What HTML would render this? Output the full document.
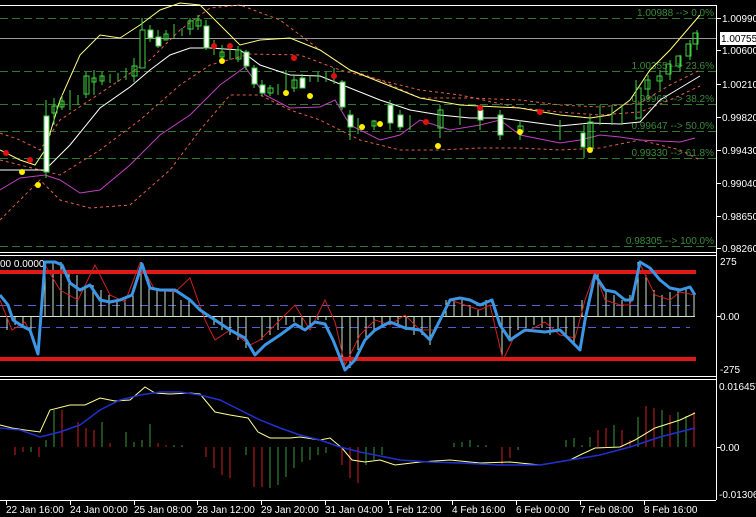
<!DOCTYPE html>
<html><head><meta charset="utf-8"><style>
html,body{margin:0;padding:0;background:#000;width:756px;height:517px;overflow:hidden}
svg{display:block}
text{font-family:"Liberation Sans",sans-serif;font-size:10px}
</style></head><body>
<svg width="756" height="517" viewBox="0 0 756 517" xmlns="http://www.w3.org/2000/svg">
<rect width="756" height="517" fill="#000"/>
<g stroke="#fff" fill="none" stroke-width="1">
<line x1="0" y1="5.5" x2="716" y2="5.5"/>
<line x1="716.5" y1="5" x2="716.5" y2="500"/>
<line x1="0" y1="252.5" x2="716" y2="252.5"/>
<line x1="0" y1="255.5" x2="716" y2="255.5"/>
<line x1="0" y1="376.5" x2="716" y2="376.5"/>
<line x1="0" y1="379.5" x2="716" y2="379.5"/>
<line x1="0" y1="500.5" x2="716" y2="500.5"/>
</g>
<g stroke="#2f7a2f" stroke-dasharray="8,4" stroke-width="1">
<line x1="0" y1="18.5" x2="716" y2="18.5"/>
<line x1="0" y1="71.5" x2="716" y2="71.5"/>
<line x1="0" y1="104.5" x2="716" y2="104.5"/>
<line x1="0" y1="131.5" x2="716" y2="131.5"/>
<line x1="0" y1="158.5" x2="716" y2="158.5"/>
<line x1="0" y1="246.5" x2="716" y2="246.5"/>
</g>
<line x1="0" y1="38.5" x2="716" y2="38.5" stroke="#999"/>
<g fill="#3a8a3a" text-anchor="end">
<text x="714" y="16">1.00988 --&gt; 0.0%</text>
<text x="714" y="69">1.00355 --&gt; 23.6%</text>
<text x="714" y="102">0.99963 --&gt; 38.2%</text>
<text x="714" y="129">0.99647 --&gt; 50.0%</text>
<text x="714" y="156">0.99330 --&gt; 61.8%</text>
<text x="714" y="244">0.98305 --&gt; 100.0%</text>
</g>
<g fill="none" stroke-width="1">
<polyline stroke="#e0604a" stroke-dasharray="3,3" points="0,133 20,140 40,150 60,120 90,100 120,80 150,60 180,30 210,8 240,5 280,20 320,50 350,70 380,80 420,98 470,98 520,100 560,105 600,107 640,103 670,85 700,70"/>
<polyline stroke="#e0604a" stroke-dasharray="3,3" points="0,220 20,200 40,180 60,200 90,208 130,205 170,170 200,130 230,95 260,95 290,110 320,120 360,140 400,150 440,150 480,148 520,148 560,150 600,148 640,140 680,150 700,160"/>
<polyline stroke="#e0604a" stroke-dasharray="3,3" points="0,160 20,165 40,170 60,175 100,150 140,120 180,85 210,65 250,54 300,55 340,70 380,80 420,90 460,95 520,108 560,112 600,115 640,112 670,100 700,86"/>
<polyline stroke="#ffff80" points="0,150 20,160 35,165 45,150 60,100 80,55 100,35 120,38 140,25 160,10 180,3 200,5 220,25 240,45 260,40 290,38 320,50 350,70 380,82 420,98 460,105 520,108 560,115 590,118 610,115 630,100 650,70 670,50 700,15"/>
<polyline stroke="#fff" points="0,170 20,170 45,170 70,145 100,108 130,87 150,70 170,55 190,48 210,48 240,50 260,65 290,75 320,76 350,88 380,100 410,110 440,115 470,118 500,118 530,122 560,126 590,123 620,124 640,122 660,100 680,88 700,76"/>
<polyline stroke="#c040c0" points="0,190 20,178 45,175 60,180 80,193 100,190 130,165 160,135 190,115 220,85 245,67 265,95 290,108 320,107 335,100 350,125 380,140 400,135 420,120 450,130 480,125 500,120 520,135 560,143 580,140 600,135 620,137 640,140 680,142 695,138"/>
</g>
<g stroke="#3fd23f" fill="#fff" stroke-width="1">
<path d="M46,100V178M54,98V125M62,95V110M70,90V110M78,95V105M86,72V98M94,70V95M102,72V85M110,74V83M118,73V82M126,68V80M134,58V82M142,18V68M150,25V42M158,30V48M166,30V40M174,24V38M182,28V36M190,18V35M198,15V30M206,20V50M214,40V55M222,45V58M230,47V60M238,46V62M246,50V70M254,65V88M262,80V96M270,85V96M278,84V95M286,70V95M294,76V92M302,74V85M310,75V82M318,72V82M326,72V82M334,68V84M342,80V110M350,110V140M358,118V134M374,120V130M390,100V130M400,110V130M410,115V130M440,105V138M460,108V125M480,108V130M500,110V140M520,120V140M560,120V140M584,125V158M590,115V150M600,105V125M612,105V125M622,105V125M636,80V120M648,75V100M660,70V90M670,60V80M680,55V72M690,40V60M697,30V50"/>
<rect x="44" y="116" width="5" height="56"/><rect x="52" y="106" width="5" height="7" fill="none"/>
<rect x="60" y="101" width="4" height="6" fill="none"/><rect x="84" y="76" width="5" height="18" fill="none"/>
<rect x="92" y="78" width="4" height="4" fill="none"/><rect x="100" y="76" width="4" height="5" fill="none"/>
<rect x="132" y="66" width="5" height="10" fill="none"/><rect x="140" y="30" width="5" height="38" fill="#000"/>
<rect x="148" y="30" width="5" height="8"/><rect x="156" y="37" width="5" height="9"/>
<rect x="164" y="34" width="4" height="6" fill="none"/><rect x="188" y="21" width="5" height="8" fill="none"/>
<rect x="196" y="20" width="5" height="6" fill="none"/><rect x="204" y="26" width="5" height="22"/>
<rect x="220" y="52" width="4" height="5" fill="none"/><rect x="236" y="50" width="5" height="9" fill="none"/>
<rect x="244" y="52" width="5" height="14"/><rect x="252" y="68" width="5" height="16"/>
<rect x="260" y="85" width="5" height="8"/><rect x="268" y="88" width="5" height="5" fill="none"/>
<rect x="292" y="80" width="5" height="8" fill="none"/><rect x="300" y="78" width="5" height="10"/>
<rect x="340" y="82" width="5" height="25"/><rect x="348" y="115" width="5" height="12"/>
<rect x="372" y="121" width="4" height="5" fill="none"/><rect x="388" y="105" width="5" height="18"/>
<rect x="398" y="115" width="5" height="12"/><rect x="438" y="110" width="5" height="18" fill="none"/>
<rect x="478" y="110" width="5" height="10"/><rect x="498" y="115" width="5" height="20"/>
<rect x="518" y="126" width="5" height="6" fill="none"/><rect x="581" y="133" width="4" height="14"/>
<rect x="588" y="122" width="5" height="26" fill="none"/><rect x="636" y="88" width="5" height="30" fill="none"/>
<rect x="645" y="80" width="5" height="9" fill="none"/><rect x="657" y="76" width="5" height="5" fill="none"/>
<rect x="666" y="64" width="5" height="10" fill="none"/><rect x="676" y="56" width="5" height="10" fill="none"/>
<rect x="686" y="44" width="5" height="12" fill="none"/><rect x="693" y="33" width="5" height="11" fill="none"/>
</g>
<g fill="#e01010"><circle cx="6" cy="153" r="3"/><circle cx="30" cy="160" r="3"/><circle cx="214" cy="46" r="3"/><circle cx="230" cy="46" r="3"/><circle cx="294" cy="58" r="3"/><circle cx="334" cy="76" r="3"/><circle cx="480" cy="108" r="3"/><circle cx="540" cy="112" r="3"/><circle cx="426" cy="122" r="3"/></g>
<g fill="#ffee00"><circle cx="22" cy="172" r="3"/><circle cx="38" cy="185" r="3"/><circle cx="222" cy="61" r="3"/><circle cx="286" cy="93" r="3"/><circle cx="310" cy="96" r="3"/><circle cx="362" cy="127" r="3"/><circle cx="438" cy="146" r="3"/><circle cx="520" cy="132" r="3"/><circle cx="590" cy="150" r="3"/><circle cx="380" cy="124" r="3"/></g>
<text x="0" y="267" fill="#fff">00 0.0000</text>
<g stroke="#5060d0" stroke-dasharray="8,6"><line x1="0" y1="305.5" x2="690" y2="305.5"/><line x1="0" y1="327.5" x2="690" y2="327.5"/></g>
<g stroke="#c8e8c8" stroke-width="1" fill="none">
<line x1="0" y1="316.5" x2="695" y2="316.5"/>
<path d="M45,263V316M53,262V316M61,262V316M69,270V316M77,275V316M85,285V316M93,285V316M101,290V316M109,295V316M117,300V316M125,300V316M133,290V316M141,262V316M149,283V316M157,290V316M165,290V316M173,292V316M181,300V316M189,300V316M7,316V330M15,316V325M23,316V325M31,316V335M214,316V325M222,316V330M230,316V335M238,316V340M246,316V348M262,316V340M270,316V335M278,316V330M286,316V325M294,316V322M302,316V330M310,316V325M318,316V320M326,316V320M342,316V365M350,316V368M358,316V350M366,316V340M374,316V330M382,316V325M390,316V325M398,316V325M406,316V330M414,316V335M422,316V335M430,316V345M446,316V300M454,316V298M462,316V300M470,316V305M478,316V310M486,316V300M502,316V355M510,316V340M518,316V330M526,316V328M534,316V325M542,316V328M550,316V335M558,316V330M566,316V335M574,316V345M582,316V300M598,316V272M606,316V290M614,316V295M622,316V300M630,316V295M638,316V262M646,316V275M654,316V290M662,316V295M670,316V292M678,316V290M686,316V288M694,316V295"/>
</g>
<g stroke="#e01818" stroke-width="4"><line x1="0" y1="272" x2="696" y2="272"/><line x1="0" y1="359" x2="696" y2="359"/></g>
<polyline fill="none" stroke="#d02020" stroke-width="1" points="0,300 12,330 25,322 38,350 45,265 60,290 78,300 95,265 110,295 125,302 140,263 155,290 175,292 190,278 205,320 215,340 230,330 250,345 260,340 280,320 295,305 310,330 325,300 335,322 345,365 360,335 375,320 390,325 405,315 420,330 435,330 450,300 465,305 480,310 490,305 503,360 515,335 530,330 545,322 560,335 575,338 585,300 595,272 605,300 620,305 630,305 640,264 655,295 670,300 680,292 695,295"/>
<polyline fill="none" stroke="#3c96e6" stroke-width="3" stroke-linejoin="round" points="0,295 8,305 13,320 22,326 30,330 38,354 45,262 55,262 62,265 70,283 80,290 90,285 100,300 110,302 120,300 132,295 142,264 150,288 160,290 175,290 190,300 200,310 215,320 230,330 245,338 255,355 265,345 280,335 295,324 305,330 315,322 325,324 333,340 345,370 355,360 365,340 375,330 390,322 405,328 420,330 430,340 440,320 450,300 460,298 470,300 480,305 492,300 500,325 510,340 525,330 545,332 560,330 570,340 580,350 585,320 595,275 605,290 615,292 625,300 632,300 640,262 650,268 660,280 670,288 680,290 690,287 695,295"/>
<g stroke-width="1">
<path stroke="#d02020" d="M15,447V455M23,447V452M39,447V457M62,447V410M78,447V422M86,447V428M94,447V430M110,447V443M158,447V443M166,447V445M206,447V457M214,447V468M222,447V475M230,447V478M254,447V487M262,447V487M278,447V475M342,447V465M350,447V478M358,447V483M502,447V465M510,447V458M598,447V430M606,447V428M622,447V430M630,447V440M646,447V406M654,447V408M670,447V415M694,447V412"/>
<path stroke="#3a9a3a" d="M31,447V452M46,447V440M54,447V410M102,447V422M126,447V432M134,447V442M142,447V440M150,447V424M174,447V445M182,447V445M246,447V455M270,447V488M278,447V485M286,447V477M294,447V468M302,447V462M310,447V460M318,447V455M326,447V453M366,447V465M374,447V460M382,447V455M454,447V443M462,447V442M470,447V440M478,447V445M486,447V445M494,447V447M518,447V450M526,447V447M566,447V440M574,447V438M582,447V445M590,447V437M614,447V425M638,447V417M662,447V410M678,447V412M686,447V416"/>
</g>
<polyline fill="none" stroke="#ffff90" stroke-width="1" points="0,425 12,428 25,430 40,432 50,410 70,405 85,405 100,398 115,401 130,400 145,387 155,393 170,394 190,393 200,394 215,412 230,415 248,418 258,432 270,438 290,438 300,437 320,440 330,438 342,448 352,460 365,462 380,460 395,465 420,462 450,460 480,463 510,462 540,465 570,460 580,455 595,448 620,447 635,440 655,428 680,420 695,413"/>
<polyline fill="none" stroke="#2030d0" stroke-width="1.5" points="0,428 20,430 40,437 60,432 80,425 100,410 120,400 140,395 160,392 180,392 200,395 220,400 240,410 260,420 280,428 300,435 320,440 340,447 360,452 380,456 400,460 430,462 460,463 500,465 540,465 570,460 600,455 630,447 660,437 695,428"/>
<g fill="#fff"><g stroke="#fff"><path d="M717,18.5h4M717,50.5h4M717,84.5h4M717,117.5h4M717,150.5h4M717,183.5h4M717,216.5h4M717,248.5h4M717,316.5h4M717,447.5h4"/></g>
<text x="722" y="22">1.00990</text>
<rect x="720" y="32" width="36" height="13" fill="#fff"/><text x="721" y="42" fill="#000">1.00755</text>
<text x="722" y="54">1.00600</text><text x="722" y="88">1.00210</text><text x="722" y="121">0.99820</text>
<text x="722" y="154">0.99430</text><text x="722" y="187">0.99040</text><text x="722" y="220">0.98650</text>
<text x="722" y="252">0.98260</text>
<text x="720" y="265">275</text><text x="720" y="320">0.00</text><text x="720" y="373">-275</text>
<text x="719" y="390">0.016457</text><text x="720" y="451">0.00</text><text x="719" y="498">-0.01306</text>
</g>
<g stroke="#fff"><path d="M6.5,501v4M70.5,501v4M134.5,501v4M197.5,501v4M261.5,501v4M325.5,501v4M388.5,501v4M452.5,501v4M516.5,501v4M580.5,501v4M644.5,501v4"/></g>
<g fill="#fff">
<text x="6" y="513">22 Jan 16:00</text><text x="70" y="513">24 Jan 00:00</text><text x="134" y="513">25 Jan 08:00</text>
<text x="197" y="513">28 Jan 12:00</text><text x="261" y="513">29 Jan 20:00</text><text x="325" y="513">31 Jan 04:00</text>
<text x="388" y="513">1 Feb 12:00</text><text x="452" y="513">4 Feb 16:00</text><text x="516" y="513">6 Feb 00:00</text>
<text x="580" y="513">7 Feb 08:00</text><text x="644" y="513">8 Feb 16:00</text>
</g>
</svg>
</body></html>
